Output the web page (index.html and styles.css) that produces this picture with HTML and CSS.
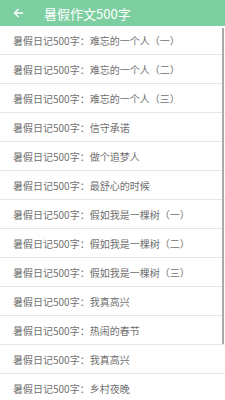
FILE: index.html
```html
<!DOCTYPE html>
<html lang="zh">
<head>
  <meta charset="UTF-8" />
  <meta name="viewport" content="width=device-width, initial-scale=1.0" />
  <title>暑假作文500字</title>
  <link rel="stylesheet" href="styles.css">
</head>
<body>

  <!-- 顶部栏 -->
  <div class="top-bar">
    <svg class="back" width="11" height="10" viewBox="0 0 11 10">
      <path d="M10 5H1.5M5.5 1L1.5 5l4 4" fill="none" stroke="#fff" stroke-width="1.4"/>
    </svg>
    <span class="title">暑假作文500字</span>
  </div>

  <!-- 列表 -->
  <div class="list">
    <div class="item">暑假日记500字：难忘的一个人（一）</div>
    <div class="item">暑假日记500字：难忘的一个人（二）</div>
    <div class="item">暑假日记500字：难忘的一个人（三）</div>
    <div class="item">暑假日记500字：信守承诺</div>
    <div class="item">暑假日记500字：做个追梦人</div>
    <div class="item">暑假日记500字：最舒心的时候</div>
    <div class="item">暑假日记500字：假如我是一棵树（一）</div>
    <div class="item">暑假日记500字：假如我是一棵树（二）</div>
    <div class="item">暑假日记500字：假如我是一棵树（三）</div>
    <div class="item">暑假日记500字：我真高兴</div>
    <div class="item">暑假日记500字：热闹的春节</div>
    <div class="item">暑假日记500字：我真高兴</div>
    <div class="item">暑假日记500字：乡村夜晚</div>
    <div class="scrollbar"></div>
  </div>

</body>
</html>
```

FILE: styles.css
```css
body {
  margin: 0;
  width: 225px;
  height: 400px;
  overflow: hidden;
  background: #ffffff;
  font-family: 'Noto Sans CJK SC', 'Noto Sans', sans-serif;
}

.top-bar {
  height: 26px;
  background: #7dcfa1;
  display: flex;
  align-items: center;
  padding-left: 13px;
}

.back {
  display: block;
}

.title {
  color: #ffffff;
  font-size: 13px;
  margin-left: 20px;
  line-height: 1;
}

.list {
  position: relative;
}

.item {
  height: 28px;
  border-bottom: 1px solid #e6e6e6;
  display: flex;
  align-items: center;
  padding-left: 13px;
  font-size: 10px;
  color: #707070;
}

.scrollbar {
  position: absolute;
  top: 2px;
  right: 1px;
  width: 2px;
  height: 316px;
  background: #a8a8a8;
}
```
